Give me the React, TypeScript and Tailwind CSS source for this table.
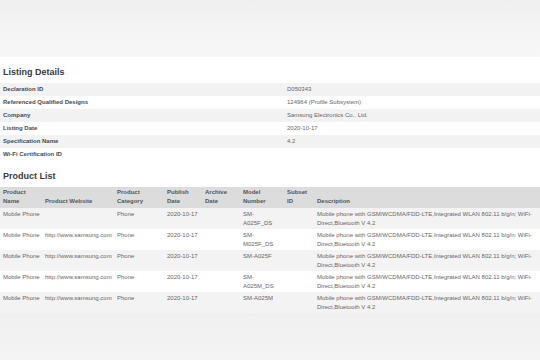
import React from 'react';

const details: [string, string][] = [
  ['Declaration ID', 'D050343'],
  ['Referenced Qualified Designs', '124964 (Profile Subsystem)'],
  ['Company', 'Samsung Electronics Co., Ltd.'],
  ['Listing Date', '2020-10-17'],
  ['Specification Name', '4.2'],
  ['Wi-Fi Certification ID', ''],
];

const desc = 'Mobile phone with GSM/WCDMA/FDD-LTE,Integrated WLAN 802.11 b/g/n; WiFi-Direct,Bluetooth V 4.2';

const products = [
  { name: 'Mobile Phone', site: '', model: 'SM-A025F_DS' },
  { name: 'Mobile Phone', site: 'http://www.samsung.com', model: 'SM-M025F_DS' },
  { name: 'Mobile Phone', site: 'http://www.samsung.com', model: 'SM-A025F' },
  { name: 'Mobile Phone', site: 'http://www.samsung.com', model: 'SM-A025M_DS' },
  { name: 'Mobile Phone', site: 'http://www.samsung.com', model: 'SM-A025M' },
];

// model numbers with an underscore wrap after the hyphen in the original
const ModelCell = ({ model }: { model: string }) =>
  model.includes('_') ? (
    <>
      SM-
      <br />
      {model.slice(3)}
    </>
  ) : (
    <>{model}</>
  );

const App: React.FC = () => {
  return (
    <div className="w-[540px] h-[360px] flex flex-col bg-white overflow-hidden" style={{ fontFamily: '"Liberation Sans", Arial, sans-serif' }}>
      {/* blurred page header */}
      <div className="h-[57px] bg-gradient-to-b from-[#efefef] via-[#f4f4f4] to-[#f7f7f7]" />

      {/* Listing Details */}
      <h2 className="mt-[8px] px-[3px] text-[9px] leading-[14px] font-bold text-[#3a3a3a]">Listing Details</h2>
      <div className="mt-[4px] flex flex-col">
        {details.map(([label, value], i) => (
          <div key={label} className={`grid grid-cols-[284px_1fr] h-[13px] items-center text-[6px] ${i % 2 === 0 ? 'bg-[#f2f2f2]' : 'bg-white'}`}>
            <span className="pl-[3px] font-bold text-[#4a4a4a]">{label}</span>
            <span className="pl-[3px] text-[#666]">{value}</span>
          </div>
        ))}
      </div>

      {/* Product List */}
      <h2 className="mt-[8px] px-[3px] text-[9px] leading-[14px] font-bold text-[#3a3a3a]">Product List</h2>
      <table className="mt-[4px] w-[540px] table-fixed border-collapse text-[6px] leading-[9px]">
        <colgroup>
          <col className="w-[42px]" />
          <col className="w-[72px]" />
          <col className="w-[50px]" />
          <col className="w-[38px]" />
          <col className="w-[38px]" />
          <col className="w-[44px]" />
          <col className="w-[30px]" />
          <col />
        </colgroup>
        <thead>
          <tr className="h-[21px] bg-[#dcdcdc] text-left font-bold text-[#555]">
            <th className="px-[3px] pb-[2px] align-bottom font-bold">Product Name</th>
            <th className="px-[3px] pb-[2px] align-bottom font-bold">Product Website</th>
            <th className="px-[3px] pb-[2px] align-bottom font-bold">Product Category</th>
            <th className="px-[3px] pb-[2px] align-bottom font-bold">Publish Date</th>
            <th className="px-[3px] pb-[2px] align-bottom font-bold">Archive Date</th>
            <th className="px-[3px] pb-[2px] align-bottom font-bold">Model Number</th>
            <th className="px-[3px] pb-[2px] align-bottom font-bold">Subset ID</th>
            <th className="px-[3px] pb-[2px] align-bottom font-bold">Description</th>
          </tr>
        </thead>
        <tbody className="text-[#666]">
          {products.map((p, i) => (
            <tr key={p.model} className={`h-[21px] ${i % 2 === 0 ? 'bg-[#f3f3f3]' : 'bg-white'}`}>
              <td className="pl-[3px] pt-[2px] align-top whitespace-nowrap">{p.name}</td>
              <td className="pl-[3px] pt-[2px] align-top whitespace-nowrap">{p.site}</td>
              <td className="px-[3px] pt-[2px] align-top">Phone</td>
              <td className="px-[3px] pt-[2px] align-top">2020-10-17</td>
              <td className="px-[3px] pt-[2px] align-top"></td>
              <td className="px-[3px] pt-[2px] align-top whitespace-nowrap"><ModelCell model={p.model} /></td>
              <td className="px-[3px] pt-[2px] align-top"></td>
              <td className="pl-[3px] pr-[8px] pt-[2px] align-top">{desc}</td>
            </tr>
          ))}
        </tbody>
      </table>

      {/* faded area below the table */}
      <div className="flex-1 bg-gradient-to-b from-[#f0f0f0] to-[#f4f4f4]" />
    </div>
  );
};

export default App;
